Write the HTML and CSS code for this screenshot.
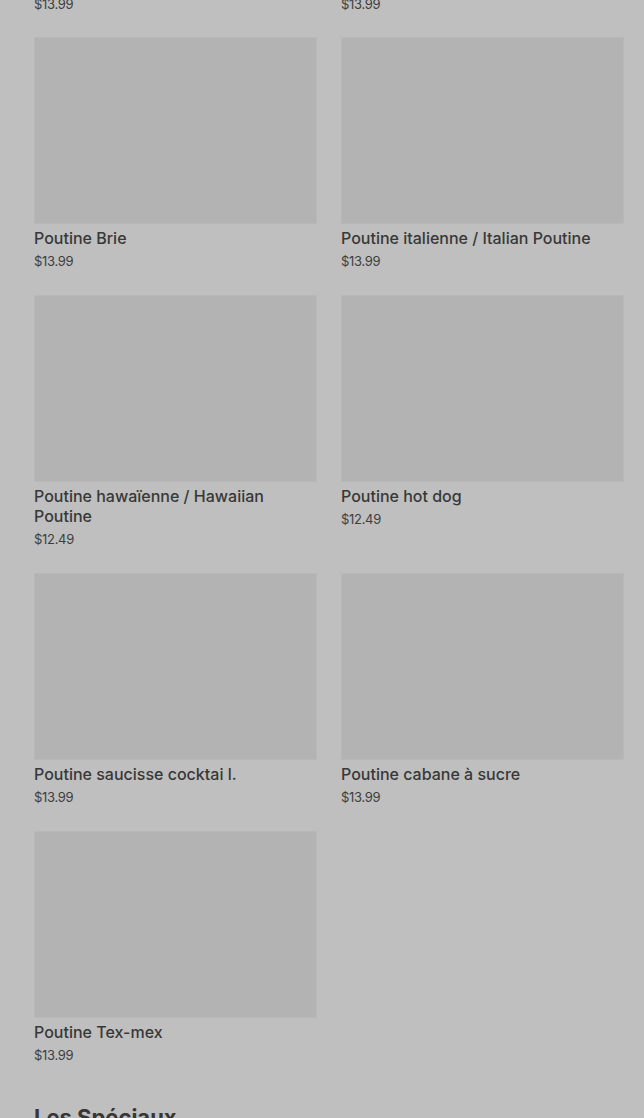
FILE: index.html
```html
<!DOCTYPE html>
<html lang="fr">
<head>
<meta charset="utf-8">
<title>Menu</title>
<link rel="stylesheet" href="styles.css">
</head>
<body>
<main class="page">
  <div class="grid grid-top">
    <div class="card"><div class="price">$13.99</div></div>
    <div class="card"><div class="price">$13.99</div></div>
  </div>
  <div class="grid">
    <div class="card"><div class="thumb"></div><div class="name">Poutine Brie</div><div class="price">$13.99</div></div>
    <div class="card"><div class="thumb"></div><div class="name">Poutine italienne / Italian Poutine</div><div class="price">$13.99</div></div>
    <div class="card"><div class="thumb"></div><div class="name">Poutine hawaïenne / Hawaiian Poutine</div><div class="price">$12.49</div></div>
    <div class="card"><div class="thumb"></div><div class="name">Poutine hot dog</div><div class="price">$12.49</div></div>
    <div class="card"><div class="thumb"></div><div class="name">Poutine saucisse cocktai l.</div><div class="price">$13.99</div></div>
    <div class="card"><div class="thumb"></div><div class="name">Poutine cabane à sucre</div><div class="price">$13.99</div></div>
    <div class="card"><div class="thumb"></div><div class="name">Poutine Tex-mex</div><div class="price">$13.99</div></div>
  </div>
  <h2 class="section-title">Les Spéciaux</h2>
</main>
</body>
</html>
```
FILE: styles.css
```css
html, body {
  margin: 0;
  padding: 0;
  background: #bfbfbf;
  overflow: hidden;
}
.page {
  padding: 0 20px 0 34px;
  font-family: Inter, "Open Sans", sans-serif;
  color: #3a3a3a;
}
.grid {
  display: grid;
  grid-template-columns: 283px 283px;
  column-gap: 24px;
  row-gap: 25px;
}
.grid-top {
  margin-top: -5px;
  margin-bottom: 24px;
}
.card {
  display: flex;
  flex-direction: column;
}
.thumb {
  height: 187px;
  background: #b3b3b3;
  box-shadow: inset 0 0 0 1px #b8b8b8;
  border-radius: 2px;
}
.name {
  margin-top: 4px;
  font-size: 16px;
  line-height: 20px;
  font-weight: 500;
  color: #383838;
}
.price {
  margin-top: 4px;
  font-size: 13px;
  line-height: 18px;
  color: #3e3e3e;
  letter-spacing: -0.3px;
}
.grid-top .price {
  margin-top: 0;
}
.section-title {
  margin: 39px 0 0;
  font-size: 22px;
  line-height: 28px;
  font-weight: 700;
  color: #363636;
}
```
